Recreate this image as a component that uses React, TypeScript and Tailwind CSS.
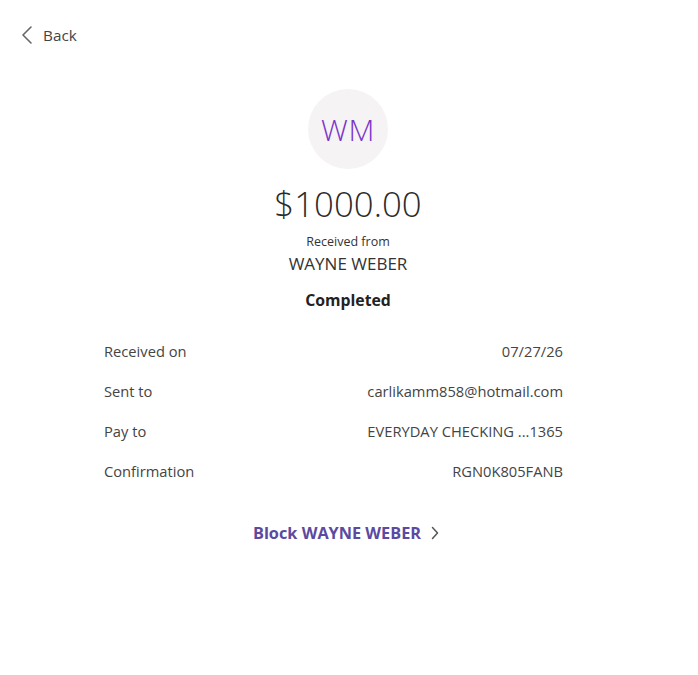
import React from 'react';

const rows = [
  { label: 'Received on', value: '07/27/26' },
  { label: 'Sent to', value: 'carlikamm858@hotmail.com' },
  { label: 'Pay to', value: 'EVERYDAY CHECKING ...1365' },
  { label: 'Confirmation', value: 'RGN0K805FANB' },
];

const App: React.FC = () => {
  return (
    <div
      className="w-[698px] h-[675px] bg-white text-[#333]"
      style={{ fontFamily: '"Open Sans", "Noto Sans", sans-serif' }}
    >
      {/* Back link */}
      <div className="flex items-center gap-[10px] pl-[21px] pt-[24px] h-[46px]">
        <svg width="12" height="20" viewBox="0 0 12 20" fill="none">
          <path d="M10 2L2 10l8 8" stroke="#666" strokeWidth="1.6" strokeLinecap="round" strokeLinejoin="round" />
        </svg>
        <span className="text-[15.3px] text-[#444]">Back</span>
      </div>

      {/* Header */}
      <div className="flex flex-col items-center mt-[43px] pr-[2px]">
        <div className="w-[80px] h-[80px] rounded-full bg-[#f5f3f3] flex items-center justify-center">
          <span className="text-[30px] font-light text-[#7a35c9] tracking-wide">WM</span>
        </div>
        <div className="mt-[13px] text-[34.8px] font-light leading-[44px] text-[#2b2b2b]">$1000.00</div>
        <div className="mt-[8px] text-[12.5px] leading-[16px] text-[#333]">Received from</div>
        <div className="mt-[3px] text-[17px] leading-[22px] text-[#333]">WAYNE WEBER</div>
        <div className="mt-[14px] text-[15.8px] font-bold leading-[22px] text-[#222]">Completed</div>
      </div>

      {/* Details */}
      <div className="mx-[104px] mt-[29px] w-[459px] flex flex-col gap-[18px]">
        {rows.map((r) => (
          <div key={r.label} className="flex justify-between text-[14.7px] leading-[22px] text-[#444]">
            <span>{r.label}</span>
            <span>{r.value}</span>
          </div>
        ))}
      </div>

      {/* Block link */}
      <div className="flex justify-center mt-[39px]">
        <div className="flex items-center gap-[10px] ml-[-6px]">
          <span className="text-[16.3px] font-bold text-[#5b4a9f]">Block WAYNE WEBER</span>
          <svg width="8" height="14" viewBox="0 0 8 14" fill="none">
            <path d="M1.5 1.5L6.5 7l-5 5.5" stroke="#555" strokeWidth="1.5" strokeLinecap="round" strokeLinejoin="round" />
          </svg>
        </div>
      </div>
    </div>
  );
};

export default App;
